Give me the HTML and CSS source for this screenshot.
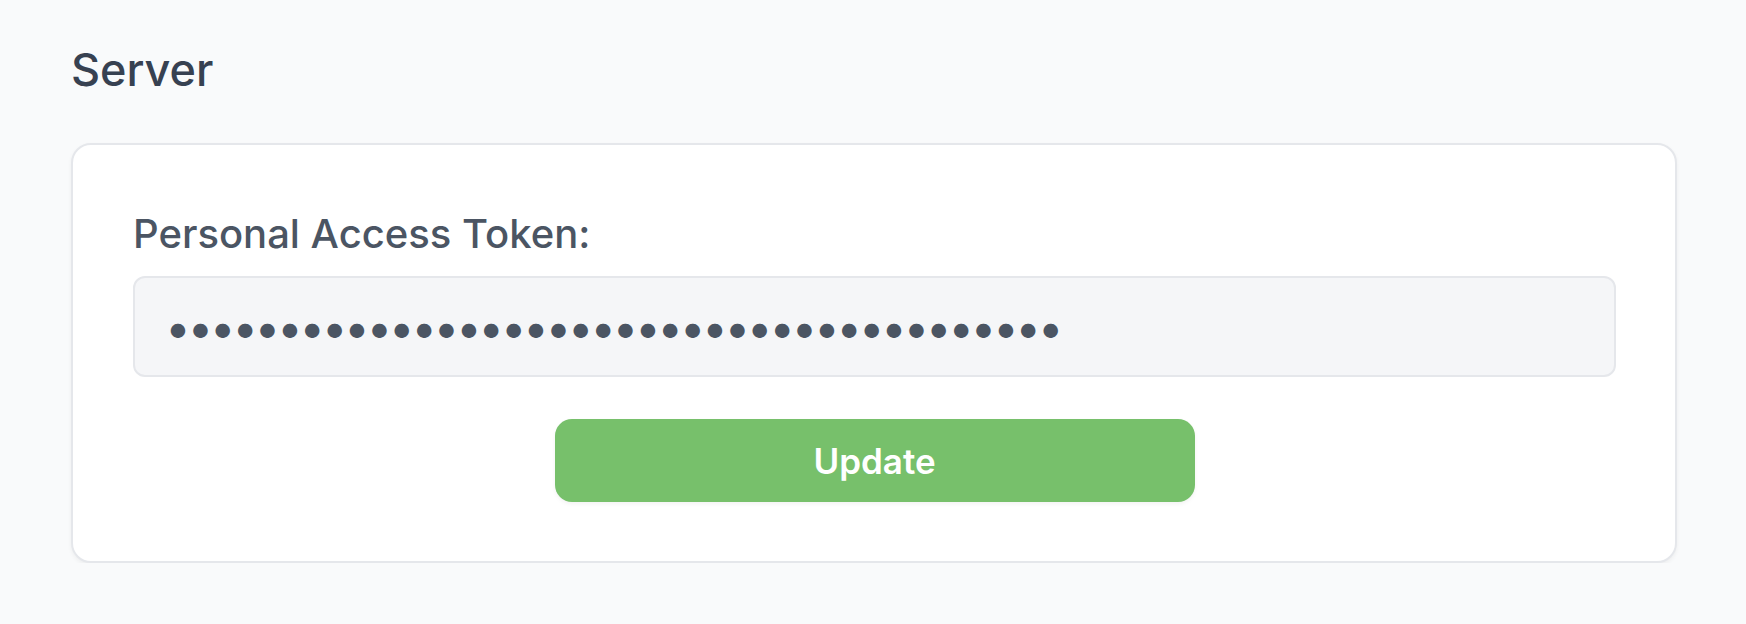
FILE: index.html
```html
<!DOCTYPE html>
<html lang="en">
<head>
<meta charset="utf-8">
<title>Server</title>
<link rel="stylesheet" href="styles.css">
</head>
<body>
<main class="page">
  <h1 class="page-title">Server</h1>
  <section class="card">
    <form class="token-form" onsubmit="return false">
      <label class="field-label" for="token">Personal Access Token:</label>
      <input class="token-input" id="token" type="password" value="ghp_0123456789abcdefghijklmnopqrstuvwxyz">
      <div class="actions">
        <button class="btn-update" type="submit">Update</button>
      </div>
    </form>
  </section>
</main>
</body>
</html>
```

FILE: styles.css
```css
* { box-sizing: border-box; }

html, body {
  margin: 0;
  padding: 0;
  background: #f9fafb;
}

body {
  font-family: Inter, "Noto Sans", "Liberation Sans", sans-serif;
  color: #374151;
}

.page {
  padding: 42px 69px 0 71px;
}

.page-title {
  margin: 0 0 45px 0;
  font-size: 45px;
  line-height: 56px;
  font-weight: 500;
  color: #374151;
}

.card {
  background: #ffffff;
  border: 2px solid #e5e7eb;
  border-radius: 20px;
  box-shadow: 0 2px 4px rgba(0, 0, 0, 0.05);
  padding: 65px 59px 59px 60px;
}

.token-form {
  display: flex;
  flex-direction: column;
}

.field-label {
  font-size: 40px;
  line-height: 48px;
  font-weight: 500;
  color: #4b5563;
  margin-bottom: 18px;
}

.token-input {
  height: 101px;
  width: 100%;
  background: #f5f6f8;
  border: 2px solid #e5e7eb;
  border-radius: 12px;
  padding: 0 30px;
  font-family: Inter, "Noto Sans", sans-serif;
  font-size: 46px;
  letter-spacing: -3.5px;
  color: #4b5563;
  outline: none;
}

.actions {
  display: flex;
  justify-content: center;
  margin-top: 42px;
}

.btn-update {
  width: 640px;
  height: 83px;
  border: none;
  border-radius: 17px;
  background: #77c06b;
  color: #ffffff;
  font-family: Inter, "Noto Sans", sans-serif;
  font-size: 35px;
  font-weight: 600;
  box-shadow: 0 2px 4px rgba(0, 0, 0, 0.05);
  cursor: pointer;
}
```
